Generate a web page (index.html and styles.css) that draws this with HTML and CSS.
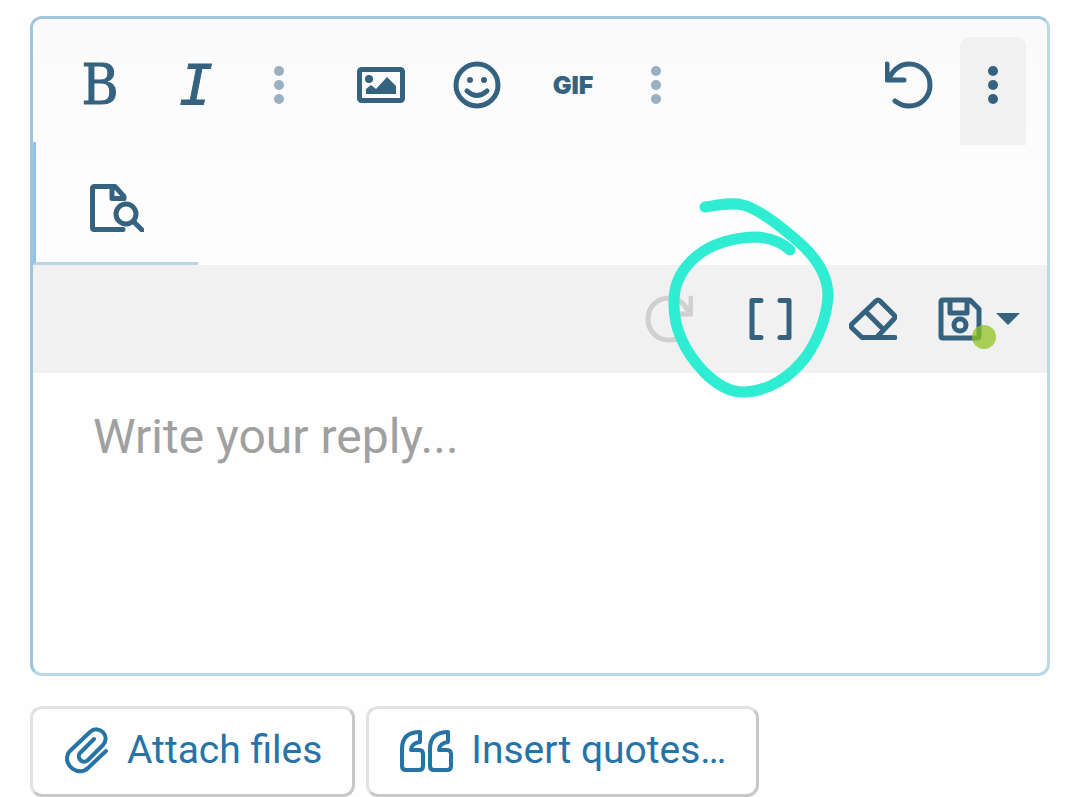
FILE: index.html
```html
<!DOCTYPE html>
<html lang="en">
<head>
    <meta charset="UTF-8">
    <meta name="viewport" content="width=device-width, initial-scale=1.0">
    <title>Write your reply</title>
    <link rel="stylesheet" href="styles.css">
</head>
<body>
    <form class="reply-form">
        <div class="editor">
            <div class="toolbar">
                <div class="toolbar-row">
                    <div class="group">
                        <button type="button" class="tool letter" aria-label="Bold">B</button>
                        <button type="button" class="tool letter italic" aria-label="Italic">I</button>
                        <button type="button" class="tool dots faded" aria-label="More text options">
                            <svg width="12" height="40" viewBox="0 0 12 40"><circle cx="6" cy="6" r="5"/><circle cx="6" cy="20" r="5"/><circle cx="6" cy="34" r="5"/></svg>
                        </button>
                    </div>
                    <div class="group">
                        <button type="button" class="tool" aria-label="Insert image">
                            <svg width="48" height="48" viewBox="0 0 48 48">
                                <rect class="line" x="2.5" y="8.5" width="43" height="31" rx="2"/>
                                <circle cx="12" cy="18" r="4"/>
                                <path d="M9 33v-5l5-4 5 4 11-12 9 9v8z"/>
                            </svg>
                        </button>
                        <button type="button" class="tool" aria-label="Smilies">
                            <svg width="48" height="48" viewBox="0 0 48 48">
                                <circle class="line" cx="24" cy="24" r="21"/>
                                <circle cx="17" cy="19" r="3"/>
                                <circle cx="31" cy="19" r="3"/>
                                <path class="line" d="M14 30q10 9 20 0"/>
                            </svg>
                        </button>
                        <button type="button" class="tool gif" aria-label="Insert GIF">GIF</button>
                        <button type="button" class="tool dots faded" aria-label="More rich options">
                            <svg width="12" height="40" viewBox="0 0 12 40"><circle cx="6" cy="6" r="5"/><circle cx="6" cy="20" r="5"/><circle cx="6" cy="34" r="5"/></svg>
                        </button>
                    </div>
                    <div class="group group-right">
                        <button type="button" class="tool wide" aria-label="Undo">
                            <svg width="48" height="48" viewBox="0 0 48 48">
                                <path class="line" d="M2 3v16h17M4 18C8 8 16 3 24 3c12 0 21 9 21 21s-9 21-21 21c-6 0-10-2-14-5"/>
                            </svg>
                        </button>
                        <button type="button" class="tool more" aria-label="More options" aria-expanded="true">
                            <svg width="12" height="40" viewBox="0 0 12 40"><circle cx="6" cy="6" r="5"/><circle cx="6" cy="20" r="5"/><circle cx="6" cy="34" r="5"/></svg>
                        </button>
                    </div>
                </div>
                <button type="button" class="preview" aria-label="Preview">
                    <svg width="54" height="48" viewBox="0 0 54 48">
                        <path class="line" d="M33 45.5H4.500q-2 0-2-2V4.500q0-2 2-2H25l9 10v2H22V3"/>
                        <circle class="line" cx="36" cy="30" r="10"/>
                        <path class="line" d="M44 38l8 8"/>
                    </svg>
                </button>
            </div>

            <div class="toolbar-extra">
                <button type="button" class="tool wide redo" aria-label="Redo" disabled>
                    <svg width="48" height="48" viewBox="0 0 48 48">
                        <path class="line" d="M46 3v16H29M44 18C40 8 32 3 24 3 12 3 3 12 3 24s9 21 21 21c5 0 10-2 14-5"/>
                    </svg>
                </button>
                <button type="button" class="tool wide" aria-label="Toggle BB code">
                    <svg width="48" height="48" viewBox="0 0 48 48">
                        <path class="line" d="M14 5.500H5v37h9M33 5.500h9v37h-9"/>
                    </svg>
                </button>
                <button type="button" class="tool wide" aria-label="Remove formatting">
                    <svg width="48" height="48" viewBox="0 0 48 48">
                        <path class="line" d="M46 42.500H13L3 33q-2-2 0-4L27 6q2-2 4 0l14 14q2 2 0 4L28 42M17 17l17 17"/>
                    </svg>
                </button>
                <button type="button" class="tool save" aria-label="Drafts">
                    <svg width="48" height="48" viewBox="0 0 48 48">
                        <path class="line" d="M7 5h27l9 9v27q0 2-2 2H7q-2 0-2-2V7q0-2 2-2zM14 6v12h17V6"/>
                        <circle class="line" cx="24" cy="30" r="6"/>
                    </svg>
                    <svg width="24" height="12" viewBox="0 0 24 12"><path d="M0 0h24L12 12z"/></svg>
                    <span class="draft-dot"></span>
                </button>
            </div>

            <textarea class="message" aria-label="Message" placeholder="Write your reply..."></textarea>

            <svg class="marker" width="166" height="202" viewBox="0 0 166 202">
                <path d="M37 10C51 8 63 5 75 8C91 12 116 32 134 48C151 64 160 82 160 99C159 118 151 142 137 161C122 180 101 194 77 195C61 196 48 187 36 175C18 156 5 133 6 104C6 84 15 70 30 58C45 46 68 40 89 40C102 41 112 44 122 53"/>
            </svg>
        </div>

        <div class="actions">
            <button type="button" class="action">
                <svg width="46" height="48" viewBox="0 0 46 48">
                    <path class="line" d="M43 25L25 42C16 51 0 40 5 28c0-1 1-2 3-4L27 6c9-8 21 4 13 13L25 34c-5 5-12-2-8-7L31 13"/>
                </svg>
                Attach files
            </button>
            <button type="button" class="action">
                <svg width="54" height="48" viewBox="0 0 54 48">
                    <path class="line" d="M21 6C9 6 3 12 3 23v17q0 4 4 4h13q4 0 4-4V28q0-4-4-4h-8c0-5 3-7 9-8zM49 6c-12 0-18 6-18 17v17q0 4 4 4h13q4 0 4-4V28q0-4-4-4h-8c0-5 3-7 9-8z"/>
                </svg>
                Insert quotes…
            </button>
        </div>
    </form>
</body>
</html>
```

FILE: styles.css
```css
* {
    box-sizing: border-box;
}

body {
    margin: 0;
    background-color: #fefefe;
    font-family: Roboto, "Liberation Sans", sans-serif;
}

button {
    margin: 0;
    padding: 0;
    border: none;
    background: none;
    color: #35627f;
    font-family: inherit;
    cursor: pointer;
}

svg {
    display: block;
    flex: none;
    fill: currentColor;
}

.line {
    fill: none;
    stroke: currentColor;
    stroke-width: 5;
    stroke-linecap: round;
    stroke-linejoin: round;
}

.reply-form {
    padding: 16px 30px 0;
}

.editor {
    position: relative;
    border: 3px solid;
    border-color: #9fc6da #b9d9e9 #b9d9e9 #9fc6da;
    border-radius: 12px;
    background-color: #fefefe;
}

.toolbar {
    border-radius: 9px 9px 0 0;
    background: linear-gradient(#fafafa, #fefefe);
}

.toolbar-row {
    display: flex;
    gap: 19px;
    padding: 18px 21px 0 19px;
}

.group {
    display: flex;
}

.group-right {
    margin-left: auto;
}

.tool {
    display: flex;
    align-items: center;
    justify-content: center;
    width: 96px;
    height: 96px;
}

.tool.wide {
    width: 102px;
}

.tool.dots {
    width: 70px;
}

.tool.faded {
    color: #9aafc0;
}

.tool.letter {
    font-family: "DejaVu Serif Condensed", "DejaVu Serif", serif;
    font-size: 56px;
    line-height: 56px;
    -webkit-text-stroke: 1px currentColor;
}

.tool.italic {
    font-family: "DejaVu Sans Mono", monospace;
    font-style: italic;
}

.tool.gif {
    font-family: Inter, sans-serif;
    font-size: 25px;
    font-weight: 900;
}

.tool.more {
    width: 66px;
    height: 108px;
    padding-bottom: 12px;
    border-radius: 9px 9px 0 0;
    background-color: #f1f1f1;
}

.preview {
    display: flex;
    align-items: center;
    justify-content: center;
    width: 165px;
    height: 123px;
    margin-top: -3px;
    padding-top: 12px;
    border-left: 3px solid #8fc5e8;
    border-bottom: 3px solid #b9d6e6;
}

.toolbar-extra {
    display: flex;
    align-items: center;
    justify-content: flex-end;
    height: 108px;
    padding-right: 21px;
    background-color: #f1f1f1;
}

.tool.redo {
    color: #d0d0d0;
}

.tool.save {
    position: relative;
    gap: 12px;
    width: 102px;
    padding: 0 6px 0 12px;
}

.draft-dot {
    position: absolute;
    top: 54px;
    left: 48px;
    width: 24px;
    height: 24px;
    border-radius: 50%;
    background-color: #8fc31f;
    opacity: 0.75;
}

.message {
    display: block;
    width: 100%;
    height: 300px;
    padding: 30px 60px;
    border: none;
    border-radius: 0 0 9px 9px;
    outline: none;
    resize: none;
    background: none;
    color: #141414;
    font-family: inherit;
    font-size: 48px;
    line-height: 68px;
}

.message::placeholder {
    color: #a0a0a0;
    opacity: 1;
}

.marker {
    position: absolute;
    top: 178px;
    right: 213px;
    color: #2eedd3;
    fill: none;
    stroke: currentColor;
    stroke-width: 11;
    stroke-linecap: round;
    stroke-linejoin: round;
    pointer-events: none;
}

.actions {
    display: flex;
    gap: 11px;
    margin-top: 30px;
}

.action {
    display: flex;
    align-items: center;
    gap: 18px;
    height: 91px;
    padding: 0 30px 4px;
    border: 3px solid;
    border-color: #e2e2e2 #c8c8c8 #c8c8c8 #e2e2e2;
    border-radius: 12px;
    color: #2673a6;
    font-size: 39px;
}

.action .line {
    stroke-width: 4;
}
```
